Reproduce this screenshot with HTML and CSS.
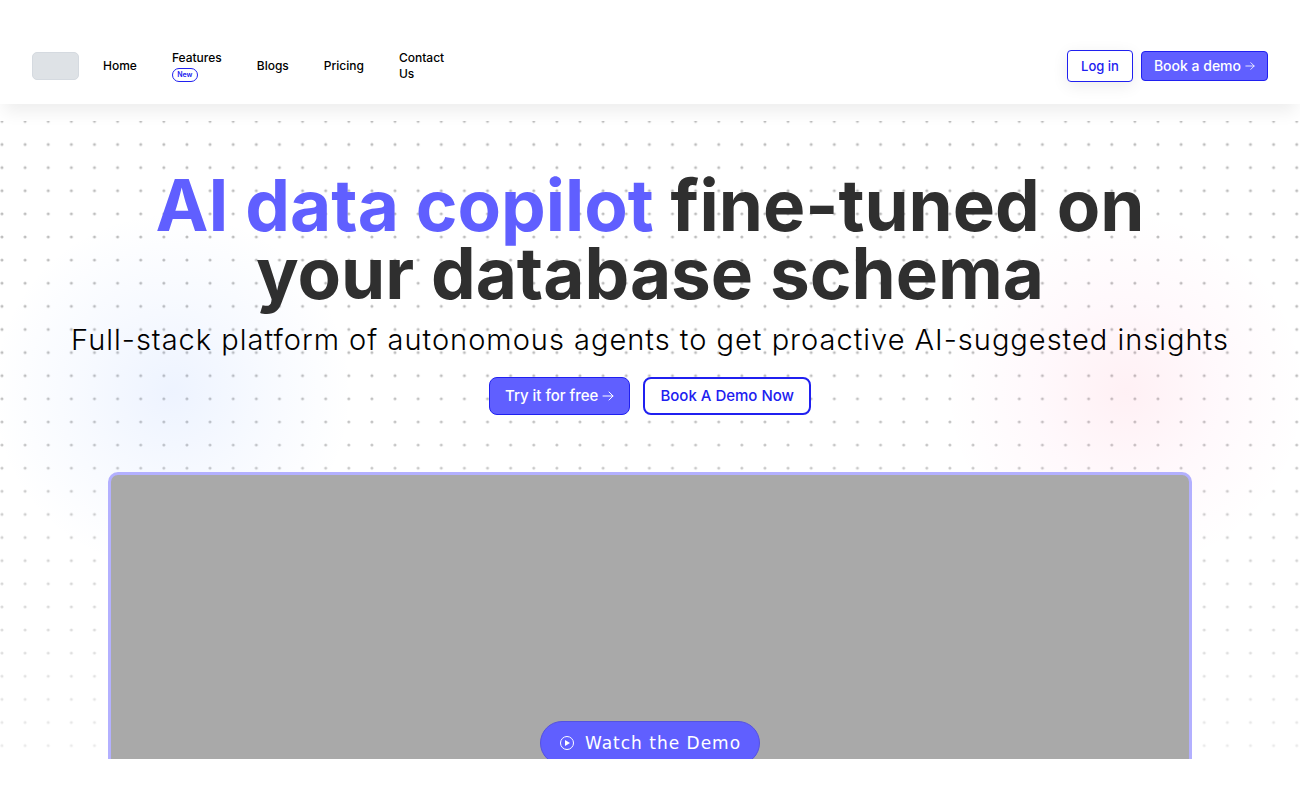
FILE: index.html
```html
<!DOCTYPE html>
<html lang="en">
<head>
    <meta charset="utf-8">
    <meta name="viewport" content="width=device-width, initial-scale=1">
    <title>AI data copilot</title>
    <link rel="stylesheet" href="styles.css">
</head>
<body>
    <header class="navbar">
        <a class="logo" href="#" aria-label="Homepage"></a>
        <nav class="nav-links">
            <a href="#">Home</a>
            <a href="#">Features <span class="badge">New</span></a>
            <a href="#">Blogs</a>
            <a href="#">Pricing</a>
            <a href="#">Contact<br>Us</a>
        </nav>
        <div class="nav-actions">
            <button class="btn btn-login" type="button">Log in</button>
            <button class="btn btn-book" type="button">Book a demo
                <svg class="arrow" viewBox="0 0 12 12"><path d="M1 6h10M7 2l4 4-4 4"/></svg>
            </button>
        </div>
    </header>

    <main class="hero">
        <svg class="dots" width="100%" height="100%" aria-hidden="true">
            <defs>
                <pattern id="dot" x="-9.5" y="5.8" width="23.12" height="23.12" patternUnits="userSpaceOnUse">
                    <circle cx="11.5" cy="11.5" r="1.5"/>
                </pattern>
            </defs>
            <rect y="17" width="100%" height="100%" fill="url(#dot)"/>
        </svg>
        <h1><span class="accent">AI data copilot</span> fine-tuned on your database schema</h1>
        <p class="subtitle">Full-stack platform of autonomous agents to get proactive AI-suggested insights</p>
        <div class="cta">
            <button class="btn btn-try" type="button">Try it for free
                <svg class="arrow" viewBox="0 0 12 12"><path d="M1 6h10M7 2l4 4-4 4"/></svg>
            </button>
            <button class="btn btn-demo" type="button">Book A Demo Now</button>
        </div>
        <div class="video">
            <button class="btn-watch" type="button">
                <svg class="play" viewBox="0 0 16 16"><circle cx="8" cy="8" r="6.5"/><path d="M6 5v6L11 8z"/></svg>
                Watch the Demo
            </button>
        </div>
    </main>
</body>
</html>
```

FILE: styles.css
```css
:root {
    --primary-color: #605fff;
    --primary-border: #2020f0;
    --text-color: #2f2f2f;
}

* {
    box-sizing: border-box;
}

body {
    display: flex;
    flex-direction: column;
    height: 100vh;
    margin: 0;
    padding: 29px 0;
    background: white;
    color: black;
    font-family: Inter, sans-serif;
}

a {
    color: inherit;
    text-decoration: none;
}

.navbar {
    position: relative;
    z-index: 1;
    display: flex;
    align-items: center;
    min-height: 75px;
    padding: 0 32px 2px;
    background: white;
    box-shadow: 0 12px 16px -4px rgba(0, 0, 0, 0.07);
}

.logo {
    width: 47px;
    height: 28px;
    margin-right: 24px;
    border: 1px solid #d5dae0;
    border-radius: 5px;
    background: #dee2e6;
}

.nav-links {
    display: flex;
    align-items: center;
    gap: 35px;
    font-size: 12px;
    line-height: 16px;
    font-weight: 500;
}

.badge {
    display: block;
    width: 26px;
    margin-top: 2px;
    border: 1px solid var(--primary-border);
    border-radius: 8px;
    color: var(--primary-border);
    font-size: 7px;
    line-height: 12px;
    font-weight: 600;
    text-align: center;
}

.nav-actions {
    display: flex;
    align-items: center;
    gap: 8px;
    margin-left: auto;
}

.btn {
    display: flex;
    align-items: center;
    justify-content: center;
    gap: 4px;
    border: 1px solid var(--primary-border);
    border-radius: 4px;
    background: var(--primary-color);
    color: white;
    font: 500 13px/20px Inter, sans-serif;
    white-space: nowrap;
    cursor: pointer;
}

.arrow {
    width: 10px;
    height: 10px;
    fill: none;
    stroke: currentColor;
    stroke-linecap: round;
    stroke-linejoin: round;
}

.btn-login {
    padding: 5px 13px;
    background: white;
    color: var(--primary-border);
    box-shadow: 0 4px 16px rgba(0, 0, 0, 0.08);
}

.btn-book {
    padding: 4px 12px;
    font-size: 14px;
}

.hero {
    position: relative;
    display: flex;
    flex: 1;
    flex-direction: column;
    align-items: center;
    min-height: 0;
    padding: 67px 32px 0;
    overflow: hidden;
    background:
        radial-gradient(circle at 172px 288px, rgba(96, 150, 255, 0.11), rgba(96, 150, 255, 0.05) 90px, transparent 180px),
        radial-gradient(circle at calc(100% - 174px) 288px, rgba(255, 70, 120, 0.08), rgba(255, 70, 160, 0.035) 90px, transparent 180px);
}

.dots {
    position: absolute;
    inset: 0;
    z-index: -1;
    fill: #bdbdbd;
    mask-image: linear-gradient(black 40%, rgba(0, 0, 0, 0.3));
}

h1 {
    max-width: 1040px;
    margin: 0;
    color: var(--text-color);
    font-size: 71px;
    line-height: 68px;
    font-weight: 700;
    text-align: center;
}

.accent {
    color: var(--primary-color);
}

.subtitle {
    margin: 12px 0 16px;
    font-size: 29px;
    line-height: 42px;
    font-weight: 300;
    letter-spacing: 1px;
    white-space: nowrap;
}

.cta {
    display: flex;
    gap: 13px;
    margin-bottom: 57px;
}

.cta .btn {
    min-height: 38px;
    padding: 0 15px;
    border-radius: 8px;
    font-size: 15px;
}

.cta .arrow {
    width: 12px;
    height: 12px;
}

.cta .btn-demo {
    border-width: 2px;
    background: white;
    color: var(--primary-border);
}

.video {
    display: flex;
    flex: none;
    align-items: center;
    justify-content: center;
    width: calc(100% - 152px);
    aspect-ratio: 2 / 1;
    border: 3px solid #b3b0ff;
    border-radius: 10px;
    background: #a9a9a9;
}

.btn-watch {
    display: flex;
    align-items: center;
    gap: 10px;
    height: 44px;
    padding: 0 18px;
    border: 1px solid #5552e0;
    border-radius: 22px;
    background: var(--primary-color);
    color: white;
    font: 17px/20px "DejaVu Sans", sans-serif;
    letter-spacing: 1px;
    cursor: pointer;
}

.play {
    width: 16px;
    height: 16px;
    fill: none;
    stroke: currentColor;
}

.play path {
    fill: currentColor;
    stroke: none;
}
```
